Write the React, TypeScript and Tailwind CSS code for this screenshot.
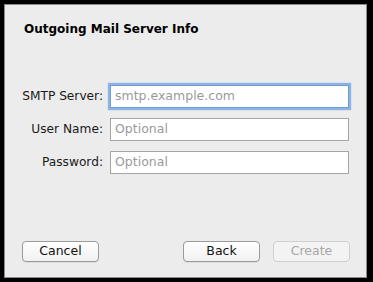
import React from "react";

const font = { fontFamily: '"DejaVu Sans", "Lucida Grande", Verdana, sans-serif' };

function Field({ label, placeholder, focused }: { label: string; placeholder: string; focused?: boolean }) {
  return (
    <div className="flex items-center h-[23px]">
      <div className="w-[99px] text-right pr-[7px] text-[12.2px] text-[#1a1a1a]">{label}</div>
      <div
        className={
          focused
            ? "w-[239px] h-[23px] border border-[#6d9ed6] shadow-[0_0_1px_2px_#8ab4e6] bg-white flex items-center pl-[4px] text-[12.5px] text-[#9a9a9a]"
            : "w-[239px] h-[23px] border border-[#a5a5a5] bg-white flex items-center pl-[4px] text-[12.5px] text-[#9a9a9a]"
        }
      >
        {placeholder}
      </div>
    </div>
  );
}

function Btn({ children, disabled }: { children: React.ReactNode; disabled?: boolean }) {
  return (
    <div
      className={
        disabled
          ? "w-[77px] h-[21px] rounded-[4px] border border-[#cfcfcf] bg-[#f3f3f3] flex items-center justify-center text-[12.5px] text-[#a8a8a8]"
          : "w-[77px] h-[21px] rounded-[4px] border border-[#9a9a9a] bg-gradient-to-b from-white to-[#f1f1f1] shadow-[0_1px_0_rgba(0,0,0,0.06)] flex items-center justify-center text-[12.5px] text-[#111]"
      }
    >
      {children}
    </div>
  );
}

export default function App() {
  return (
    <div className="w-[373px] h-[282px] bg-black pt-[4px] pl-[4px] pr-[6px] pb-[4px]" style={font}>
      <div className="w-full h-full bg-[#ececec] border border-[#8c8c8c] flex flex-col">
        <div className="pl-[19px] pt-[16px] text-[12px] font-bold text-black leading-[16px]">Outgoing Mail Server Info</div>
        <div className="flex flex-col gap-[10px] mt-[48px] pl-[6px]">
          <Field label="SMTP Server:" placeholder="smtp.example.com" focused />
          <Field label="User Name:" placeholder="Optional" />
          <Field label="Password:" placeholder="Optional" />
        </div>
        <div className="flex-1" />
        <div className="flex items-center pl-[17px] pr-[16px] pb-[15px]">
          <Btn>Cancel</Btn>
          <div className="flex-1" />
          <div className="flex gap-[13px]">
            <Btn>Back</Btn>
            <Btn disabled>Create</Btn>
          </div>
        </div>
      </div>
    </div>
  );
}
